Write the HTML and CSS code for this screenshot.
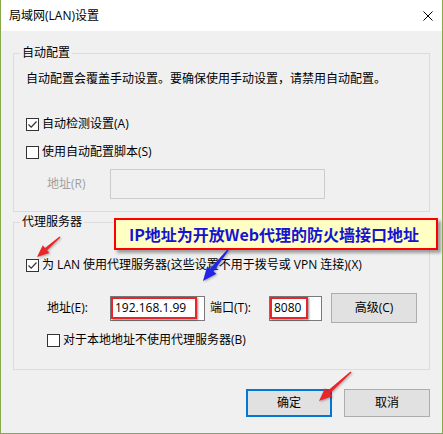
FILE: index.html
```html
<!DOCTYPE html>
<html lang="zh-CN">
<head>
<meta charset="utf-8">
<title>局域网(LAN)设置</title>
<link rel="stylesheet" href="styles.css">
</head>
<body>
<div class="window">
  <div class="titlebar">
    <span class="title">局域网(LAN)设置</span>
    <svg class="close" width="10" height="10" viewBox="0 0 10 10"><path d="M0.5 0.5 L9.5 9.5 M9.5 0.5 L0.5 9.5" stroke="#000" stroke-width="1"/></svg>
  </div>
  <div class="content">
    <fieldset class="group group-auto">
      <legend>自动配置</legend>
      <p class="desc">自动配置会覆盖手动设置。要确保使用手动设置，请禁用自动配置。</p>
      <label class="check check-first"><span class="box"><svg width="11" height="11" viewBox="0 0 11 11"><path d="M1.5 5.5 L4.2 8.2 L9.5 2.5" fill="none" stroke="#333" stroke-width="1.2"/></svg></span>自动检测设置(A)</label>
      <label class="check check-second"><span class="box"></span>使用自动配置脚本(S)</label>
      <div class="field-row field-disabled">
        <span class="field-label">地址(R)</span>
        <span class="input input-script"></span>
      </div>
    </fieldset>
    <fieldset class="group group-proxy">
      <legend>代理服务器</legend>
      <label class="check check-proxy"><span class="box"><svg width="11" height="11" viewBox="0 0 11 11"><path d="M1.5 5.5 L4.2 8.2 L9.5 2.5" fill="none" stroke="#333" stroke-width="1.2"/></svg></span>为 LAN 使用代理服务器(这些设置不用于拨号或 VPN 连接)(X)</label>
      <div class="proxy-row">
        <span class="field-label">地址(E):</span>
        <span class="input input-addr"><span class="mark mark-addr">192.168.1.99</span></span>
        <span class="port-label">端口(T):</span>
        <span class="input input-port"><span class="mark mark-port">8080</span></span>
        <button class="btn btn-adv">高级(C)</button>
      </div>
      <label class="check check-local"><span class="box"></span>对于本地地址不使用代理服务器(B)</label>
    </fieldset>
    <div class="actions">
      <button class="btn btn-ok">确定</button>
      <button class="btn btn-cancel">取消</button>
    </div>
  </div>
  <div class="callout">IP地址为开放Web代理的防火墙接口地址</div>
  <svg class="arrows" width="443" height="434" viewBox="0 0 443 434">
    <polygon fill="#e8262c" points="59.46,237.53 46.10,250.34 48.33,252.9 36,257 41.77,245.36 44.00,247.92 58.54,236.47"/>
    <polygon fill="#2424e4" points="227.62,250.5 212.5,271.48 215.46,273.87 202,281 206.12,266.33 209.08,268.72 226.38,249.5"/>
    <polygon fill="#e8262c" points="350.54,372.59 328.84,393.61 331.32,396.36 318,401 323.94,388.2 326.42,390.95 349.46,371.41"/>
  </svg>
</div>
</body>
</html>
```
FILE: styles.css
```css
* { box-sizing: border-box; }
html, body { margin: 0; padding: 0; }
body {
  font-family: "Open Sans", "Noto Sans CJK SC", sans-serif;
  font-size: 12px;
  color: #000;
  background: #f0f0f0;
}
.window {
  position: relative;
  width: 443px;
  height: 434px;
  border: 1px solid #88a94b;
  border-top: 0;
  background: #f0f0f0;
  overflow: hidden;
}
.titlebar {
  height: 31px;
  background: #fff;
  display: flex;
  align-items: center;
  justify-content: space-between;
  padding: 0 9px 0 8px;
  line-height: 16px;
}
.close { display: block; }
.content {
  padding: 14px 12px 0 12px;
}
.group {
  margin: 0;
  border: 1px solid #dcdcdc;
  min-width: 0;
  display: flex;
  flex-direction: column;
  align-items: flex-start;
}
.group legend {
  padding: 0 2px;
  margin-left: -6px;
  line-height: 16px;
}
.group-auto { padding: 10px 12px 12px 12px; }
.group-proxy { padding: 27px 12px 21px 12px; margin-top: 2px; }
.desc { margin: 0; line-height: 16px; }
.check {
  display: flex;
  align-items: center;
  height: 16px;
  line-height: 16px;
  white-space: nowrap;
}
.box {
  width: 13px;
  height: 13px;
  border: 1px solid #333;
  background: #fff;
  margin-right: 3px;
  display: flex;
  align-items: center;
  justify-content: center;
  flex: none;
}
.box svg { display: block; }
.check-first { margin-top: 29px; }
.check-second { margin-top: 12px; }
.check-local { margin-top: 9px; margin-left: 21px; }
.field-row {
  display: flex;
  align-items: center;
  margin-top: 9px;
  height: 30px;
  padding-left: 21px;
}
.field-label { width: 63px; flex: none; line-height: 16px; }
.field-disabled .field-label { color: #a0a0a0; }
.input {
  display: flex;
  align-items: flex-start;
  border: 1px solid #7a7a7a;
  background: #fff;
  height: 25px;
  flex: none;
}
.input-script {
  width: 215px;
  height: 30px;
  border-color: #cccccc;
  background: #f0f0f0;
}
.proxy-row {
  display: flex;
  align-items: center;
  height: 30px;
  margin-top: 20px;
  padding-left: 21px;
}
.input-addr { width: 95px; }
.input-port { width: 53px; }
.port-label { width: 59px; margin-left: 5px; line-height: 16px; }
.mark {
  display: block;
  height: 22px;
  border: 2px solid #e8242c;
  box-shadow: 1px 1px 2px rgba(0,0,0,0.45);
  padding-left: 2px;
  line-height: 18px;
  font-size: 12px;
}
.mark-addr { width: 86px; }
.mark-port { width: 38px; }
.btn {
  font-family: inherit;
  font-size: 12px;
  color: #000;
  background: #e1e1e1;
  border: 1px solid #adadad;
  width: 86px;
  height: 30px;
  padding: 0;
  margin: 0;
  line-height: 16px;
}
.btn-adv { margin-left: 9px; }
.actions {
  display: flex;
  justify-content: flex-end;
  gap: 12px;
  margin-top: 19px;
}
.actions .btn { height: 28px; }
.btn-ok { border: 2px solid #0078d7; }
.callout {
  position: absolute;
  left: 113px;
  top: 218px;
  width: 324px;
  height: 32px;
  border: 2px solid #ff0000;
  background: #ffffc4;
  box-shadow: 3px 3px 3px rgba(0,0,0,0.35);
  color: #1414d2;
  font-family: "Noto Sans CJK SC", sans-serif;
  font-weight: 700;
  font-size: 16px;
  line-height: 28px;
  text-align: center;
  letter-spacing: 0;
  padding-right: 4px;
  white-space: nowrap;
}
.arrows {
  position: absolute;
  left: 0;
  top: 0;
  pointer-events: none;
  filter: drop-shadow(1px 1px 1px rgba(0,0,0,0.3));
}
```
